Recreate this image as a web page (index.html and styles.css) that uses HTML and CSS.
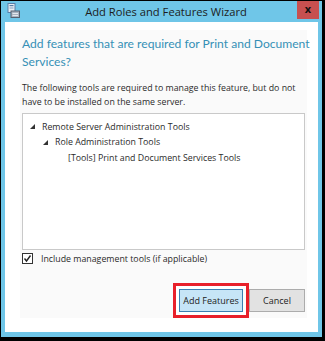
FILE: index.html
```html
<!DOCTYPE html>
<html lang="en">
<head>
    <meta charset="UTF-8">
    <title>Add Roles and Features Wizard</title>
    <link rel="stylesheet" href="styles.css">
</head>
<body>
    <div class="window">
        <!-- Title bar -->
        <div class="titlebar">
            <svg class="app-icon" width="13" height="15" viewBox="0 0 13 15">
                <rect x="1" y="0.5" width="7" height="9" fill="#e8eef4" stroke="#5a7fa8"/>
                <rect x="2.5" y="2" width="4" height="1.2" fill="#5a7fa8"/>
                <rect x="2.5" y="4.5" width="4" height="1" fill="#8aa4c0"/>
                <rect x="4" y="8" width="8.5" height="6.5" fill="#a9b4c0" stroke="#56616e"/>
                <rect x="5.5" y="10" width="5.5" height="1" fill="#e4e8ec"/>
                <rect x="5.5" y="12" width="5.5" height="1" fill="#e4e8ec"/>
            </svg>
            <span class="title">Add Roles and Features Wizard</span>
            <div class="close-btn">x</div>
        </div>

        <!-- Client area -->
        <div class="client">
            <div class="panel">
                <h1 class="heading">Add features that are required for Print and Document<br>Services?</h1>
                <p class="intro">The following tools are required to manage this feature, but do not have to be installed on the same server.</p>

                <div class="tree">
                    <div class="tree-item level-0">
                        <svg class="expander" width="5" height="5" viewBox="0 0 5 5"><polygon points="5,0 5,5 0,5" fill="#333"/></svg>
                        <span>Remote Server Administration Tools</span>
                    </div>
                    <div class="tree-item level-1">
                        <svg class="expander" width="5" height="5" viewBox="0 0 5 5"><polygon points="5,0 5,5 0,5" fill="#333"/></svg>
                        <span>Role Administration Tools</span>
                    </div>
                    <div class="tree-item level-2">
                        <span>[Tools] Print and Document Services Tools</span>
                    </div>
                </div>

                <label class="check-row">
                    <span class="checkbox">
                        <svg width="9" height="9" viewBox="0 0 9 9"><polyline points="1.5,4.5 3.5,7 7.5,1.5" fill="none" stroke="#222" stroke-width="1.4"/></svg>
                    </span>
                    <span>Include management tools (if applicable)</span>
                </label>

                <div class="buttons">
                    <span class="highlight">
                        <button class="btn btn-primary">Add Features</button>
                    </span>
                    <button class="btn">Cancel</button>
                </div>
            </div>
        </div>
    </div>
</body>
</html>
```

FILE: styles.css
```css
/* Window frame */
:root {
    --frame-color: #6fc6e8;
    --heading-color: #3590b6;
    --text-color: #2b2b2b;
}

body {
    margin: 0;
    padding: 0;
    background-color: #000;
    font-family: 'Open Sans', 'Noto Sans', sans-serif;
    color: var(--text-color);
}

.window {
    border-style: solid;
    border-color: #000;
    border-width: 1px 3px 4px 1px;
    background-color: var(--frame-color);
    display: flex;
    flex-direction: column;
    padding: 0 4px 5px 4px;
    width: 313px;
    height: 331px;
}

.titlebar {
    height: 21px;
    display: flex;
    align-items: center;
    position: relative;
    margin: 0 -4px;
}

.app-icon {
    margin-left: 6px;
    margin-top: -2px;
}

.title {
    flex: 1;
    text-align: center;
    font-size: 11.2px;
    color: #1c1c1c;
    margin-right: 10px;
}

.close-btn {
    position: absolute;
    top: 0;
    right: 3px;
    width: 22px;
    height: 18px;
    background-color: #c75050;
    color: #111;
    font-size: 11px;
    font-weight: 700;
    line-height: 16px;
    text-align: center;
}

/* Client area */
.client {
    flex: 1;
    background-color: #fff;
    padding: 8px 11px 14px 15px;
}

.panel {
    height: 100%;
    box-sizing: border-box;
    background-color: #fafafa;
    padding: 5px 2px 0 2px;
    display: flex;
    flex-direction: column;
}

.heading {
    margin: 0;
    font-family: Lato, 'Open Sans', sans-serif;
    font-size: 12.1px;
    font-weight: 400;
    line-height: 18px;
    white-space: nowrap;
    color: var(--heading-color);
}

.intro {
    margin: 10px 0 4px 0;
    font-size: 8.8px;
    line-height: 14px;
}

/* Feature tree */
.tree {
    height: 137px;
    box-sizing: border-box;
    border: 1px solid #c9c9c9;
    background-color: #fff;
    padding: 5px 0 0 0;
    font-size: 8.8px;
}

.tree-item {
    display: flex;
    align-items: center;
    height: 15.5px;
}

.expander {
    margin-right: 7px;
}

.level-0 { padding-left: 7px; }
.level-1 { padding-left: 20px; }
.level-2 { padding-left: 45px; }

.check-row {
    display: flex;
    align-items: center;
    gap: 8px;
    margin-top: 3px;
    font-size: 8.8px;
    height: 11px;
}

.checkbox {
    width: 9px;
    height: 9px;
    border: 1px solid #333;
    background-color: #fff;
    display: flex;
    align-items: center;
    justify-content: center;
}

/* Buttons */
.buttons {
    margin-top: auto;
    display: flex;
    justify-content: flex-end;
    align-items: center;
}

.highlight {
    border: 3px solid #e8202a;
    padding: 3px;
    background-color: #fff;
    display: flex;
}

.btn {
    height: 23px;
    width: 56px;
    font-family: 'Open Sans', 'Noto Sans', sans-serif;
    font-size: 9px;
    color: #222;
    background-color: #e2e2e2;
    border: 1px solid #acacac;
    padding: 0;
}

.btn-primary {
    width: 64px;
    background-color: #c6e5f7;
    border-color: #3c7fb1;
}
```
